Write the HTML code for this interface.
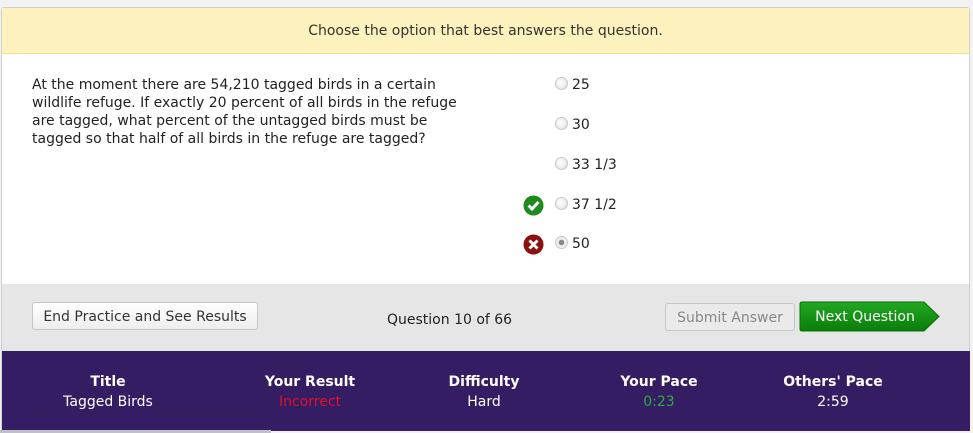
<!DOCTYPE html>
<html><head><style>
body{margin:0;width:973px;height:433px;background:#f2f2f2;font-family:"DejaVu Sans","Liberation Sans",sans-serif;font-size:14px;color:#222;position:relative;overflow:hidden}
.frame{position:absolute;left:1px;top:7px;width:967px;height:423px;border:1px solid #d0d0d0;border-bottom:none;background:#fff;border-radius:3px 3px 0 0}
.hdr{position:absolute;left:0;top:0;width:967px;height:45px;background:#fdf1bd;border-bottom:1px solid #f0e090;text-align:center;line-height:46px;color:#333}
.q{position:absolute;left:30px;top:68px;width:430px;line-height:18px;color:#222}
.opt{position:absolute;left:553px;height:16px;line-height:16px}
.rad{display:inline-block;width:11px;height:11px;border-radius:50%;border:1px solid #c8c8c8;background:radial-gradient(circle at 40% 40%,#fff,#ddd);vertical-align:-1px;margin-right:4px}
.grey{position:absolute;left:0;top:276px;width:967px;height:67px;background:#e6e6e6}
.btn{position:absolute;border:1px solid #c6c6c6;border-radius:3px;height:26px;line-height:28px;text-align:center}
.pur{position:absolute;left:0;top:343px;width:968px;height:80px;background:#351d63;color:#fff}
.col{position:absolute;top:21px;text-align:center;line-height:20px;width:140px}
.col b{display:block;font-weight:bold}
</style></head><body>
<div class="frame">
<div class="hdr">Choose the option that best answers the question.</div>
<div class="q">At the moment there are 54,210 tagged birds in a certain wildlife refuge. If exactly 20 percent of all birds in the refuge are tagged, what percent of the untagged birds must be tagged so that half of all birds in the refuge are tagged?</div>
<div class="opt" style="top:69px"><span class="rad"></span>25</div>
<div class="opt" style="top:109px"><span class="rad"></span>30</div>
<div class="opt" style="top:149px"><span class="rad"></span>33 1/3</div>
<div class="opt" style="top:189px"><span class="rad"></span>37 1/2</div>
<div class="opt" style="top:228px"><span class="rad" style="background:radial-gradient(circle,#888 0 2.5px,#eee 3px)"></span>50</div>
<svg style="position:absolute;left:521px;top:187px" width="21" height="21"><circle cx="10.5" cy="10.5" r="10" fill="#1f8a1f"/><path d="M5.5 10.5l3.5 3.5 6.5-7" stroke="#fff" stroke-width="3" fill="none"/></svg>
<svg style="position:absolute;left:521px;top:226px" width="21" height="21"><circle cx="10.5" cy="10.5" r="10" fill="#8b1111"/><path d="M6.5 6.5l8 8M14.5 6.5l-8 8" stroke="#fff" stroke-width="3"/></svg>
<div class="grey">
<div class="btn" style="left:30px;top:18px;width:224px;background:linear-gradient(#fff,#eee);color:#333">End Practice and See Results</div>
<div style="position:absolute;left:385px;top:28px;color:#222">Question 10 of 66</div>
<div class="btn" style="left:663px;top:19px;width:128px;background:#eaeaea;color:#888">Submit Answer</div>
<svg style="position:absolute;left:797px;top:17px" width="142" height="31"><defs><linearGradient id="g" x1="0" y1="0" x2="0" y2="1"><stop offset="0" stop-color="#22a822"/><stop offset="1" stop-color="#0a7d0a"/></linearGradient></defs><path d="M3 1H125L140 15.5L125 30H3Q1 30 1 28V3Q1 1 3 1Z" fill="url(#g)" stroke="#0b6e0b"/></svg>
<div style="position:absolute;left:797px;top:18px;width:132px;line-height:31px;text-align:center;color:#fff;font-size:14px">Next Question</div>
</div>
<div class="pur">
<div class="col" style="left:36px"><b>Title</b>Tagged Birds</div>
<div class="col" style="left:238px"><b>Your Result</b><span style="color:#e0102a">Incorrect</span></div>
<div class="col" style="left:412px"><b>Difficulty</b>Hard</div>
<div class="col" style="left:587px"><b>Your Pace</b><span style="color:#2eaa3e">0:23</span></div>
<div class="col" style="left:761px"><b>Others' Pace</b>2:59</div>
</div>
</div>
<div style="position:absolute;left:0;top:430px;width:271px;height:3px;background:#c0c0c8"></div>
</body></html>
